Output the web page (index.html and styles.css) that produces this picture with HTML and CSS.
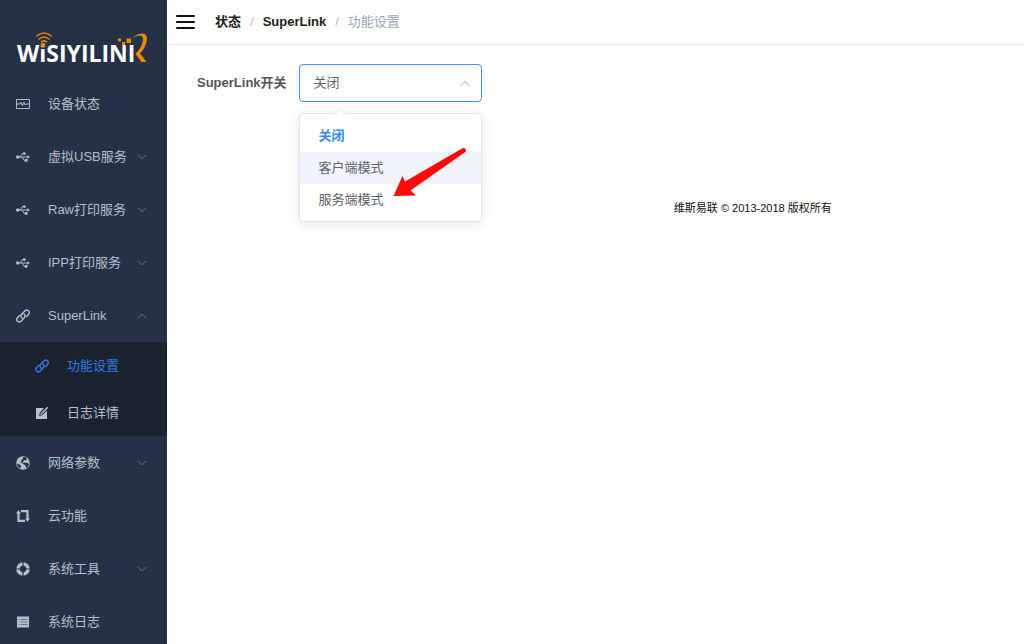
FILE: index.html
```html
<!DOCTYPE html>
<html lang="zh-CN">
<head>
<meta charset="utf-8">
<title>SuperLink 功能设置</title>
<link rel="stylesheet" href="styles.css">
</head>
<body>
<svg class="sprite" aria-hidden="true">
  <symbol id="down" viewBox="0 0 10 6"><path d="M1 .8 5 4.8 9 .8" fill="none" stroke="currentColor"/></symbol>
  <symbol id="up" viewBox="0 0 10 6"><path d="M1 5.2 5 1.2 9 5.2" fill="none" stroke="currentColor"/></symbol>
  <symbol id="usb" viewBox="0 0 14 14"><g fill="none" stroke="currentColor" stroke-width="1"><path d="M2 7h10M3.500 7C5.500 7 5 3.500 7 3.500h1M5.500 7c2 0 1.500 3.500 3.200 3.500h1"/></g><g fill="currentColor"><circle cx="1.700" cy="7" r="1.700"/><circle cx="8.300" cy="3.600" r="1.400"/><path d="M8.800 9h2.700v2.700H8.800zM11.200 5.300 14 7l-2.800 1.700z"/></g></symbol>
  <symbol id="link" viewBox="0 0 14 14"><g fill="none" stroke="currentColor" stroke-width="1.500" stroke-linecap="round"><path d="M6 9C4.600 7.700 4.700 6.400 5.700 5.300L8.800 2C9.900.9 11.300.7 12.400 1.700s1.100 2.500.1 3.600L10.600 7.400"/><path d="M8 5c1.400 1.300 1.300 2.600.3 3.700L5.200 12c-1.100 1.100-2.500 1.300-3.600.3s-1.100-2.500-.1-3.600L3.400 6.600"/></g></symbol>
</svg>
<div class="app">
  <aside class="sidebar">
    <a class="logo" href="#">
      <svg viewBox="0 0 134 36" role="img" aria-label="WISIYILINK">
        <text class="logo-text" x="1" y="32">WiSIYILINI</text>
        <g class="logo-arcs"><path d="M20 6.500q8-7 16 0M22.500 9.500q5.500-5 11 0M25 12.200q3-2.600 6 0"/></g>
        <g class="logo-accent"><circle cx="27" cy="15" r="2.200"/><path d="M102 8.500h3v3h-3zM106 12h3v3h-3zM110.500 8.500h4.500v4.500h-4.500z"/><path d="M115.500 9C121 2.500 130.500 1 131 8c0 6-3.500 12-7 15.500l6.500 8.500h-5l-6-8C124 19 127 14 127 9c0-5-6-4-11.500 0z"/></g>
      </svg>
    </a>
    <nav class="menu">
      <a class="item" href="#"><svg class="icon" viewBox="0 0 14 14"><path d="M.5 2.500h13v9H.5zM.5 7h3.300l1.100-2 1.500 4 1.500-4 1.200 3 .8-1h3.600" fill="none" stroke="currentColor"/></svg><span>设备状态</span></a>
      <a class="item" href="#"><svg class="icon"><use href="#usb"/></svg><span>虚拟USB服务</span><svg class="arrow"><use href="#down"/></svg></a>
      <a class="item" href="#"><svg class="icon"><use href="#usb"/></svg><span>Raw打印服务</span><svg class="arrow"><use href="#down"/></svg></a>
      <a class="item" href="#"><svg class="icon"><use href="#usb"/></svg><span>IPP打印服务</span><svg class="arrow"><use href="#down"/></svg></a>
      <a class="item" href="#"><svg class="icon"><use href="#link"/></svg><span>SuperLink</span><svg class="arrow"><use href="#up"/></svg></a>
      <div class="submenu">
        <a class="item active" href="#"><svg class="icon"><use href="#link"/></svg><span>功能设置</span></a>
        <a class="item" href="#"><svg class="icon" viewBox="0 0 14 14"><path d="M1 2h8L5 6.500 4 10l3.500-1L12 4.500V13H1z" fill="currentColor"/><path d="M5.500 8.500 12.800 1.200" stroke="currentColor" stroke-width="1.600"/></svg><span>日志详情</span></a>
      </div>
      <a class="item" href="#"><svg class="icon" viewBox="0 0 14 14"><circle cx="7" cy="7" r="6.800" fill="currentColor"/><path class="cut" d="M7 1.200 9.500 1 11 3 9.500 4.500 8 4 7.500 5.500 6 6l1.500 1L9 6.500l3 .5 1 1.500-1.500 3-1.500.5-.5-2.500L8 8.500 6.500 7.500 4.500 6 5 4.500 6.500 3.500zM1 7.500l2 .5 2 2-.5 2.500L2 11z"/></svg><span>网络参数</span><svg class="arrow"><use href="#down"/></svg></a>
      <a class="item" href="#"><svg class="icon" viewBox="0 0 14 14"><path d="M2.500 4v7.800H9M5 2.200h6.500V10" fill="none" stroke="currentColor" stroke-width="2.200"/><path d="M0 4.500 2.500 1.200 5 4.500zM9 9.500h5l-2.500 3.300z" fill="currentColor"/></svg><span>云功能</span></a>
      <a class="item" href="#"><svg class="icon" viewBox="0 0 14 14"><circle cx="7" cy="7" r="5" fill="none" stroke="currentColor" stroke-width="3.600"/><path class="cut" d="M6.400 0h1.200v4H6.400zM6.400 10h1.200v4H6.400zM0 6.400h4v1.200H0zM10 6.400h4v1.200h-4z"/></svg><span>系统工具</span><svg class="arrow"><use href="#down"/></svg></a>
      <a class="item" href="#"><svg class="icon" viewBox="0 0 14 14"><path d="M1 1.500h12v11H1z" fill="currentColor"/><path class="rule" d="M2.500 4.500h1M4.500 4.500h7M2.500 7h1M4.500 7h7M2.500 9.500h1M4.500 9.500h7"/></svg><span>系统日志</span></a>
    </nav>
  </aside>
  <div class="page">
    <header class="topbar">
      <button class="toggle" aria-label="折叠菜单"><svg viewBox="0 0 20 16"><path d="M2 2h17M2 8h17M2 14h17" stroke="currentColor" stroke-width="2" stroke-linecap="round"/></svg></button>
      <nav class="crumbs"><a href="#">状态</a><i>/</i><a href="#">SuperLink</a><i>/</i><span>功能设置</span></nav>
    </header>
    <main class="content">
      <form class="form">
        <label for="mode">SuperLink开关</label>
        <div class="field">
          <select id="mode"><option>关闭</option><option>客户端模式</option><option>服务端模式</option></select>
          <svg class="caret"><use href="#up"/></svg>
          <ul class="dropdown" role="listbox" aria-label="SuperLink开关">
            <li class="selected" role="option" aria-selected="true">关闭</li>
            <li class="hover" role="option">客户端模式</li>
            <li role="option">服务端模式</li>
          </ul>
          <svg class="pointer" viewBox="0 0 76 52" aria-hidden="true"><path d="M1.500 49 10.500 29 13 34.500 70.500 1.200Q74 0 74 4.500L18.500 43.500 24 48.500z"/></svg>
        </div>
      </form>
      <footer class="footer">维斯易联 © 2013-2018 版权所有</footer>
    </main>
  </div>
</div>
</body>
</html>
```
FILE: styles.css
```css
* { box-sizing: border-box; }
body {
  margin: 0;
  font: 13px/20px "Liberation Sans", "Noto Sans CJK SC", sans-serif;
  color: #000;
  background: #fff;
}
a { color: inherit; text-decoration: none; }
.sprite { position: absolute; width: 0; height: 0; }
.app { display: flex; min-height: 100vh; }

.sidebar { flex: 0 0 167px; background: #253144; color: #b4c0ce; }
.logo { display: block; height: 77px; padding: 30px 0 0 16px; }
.logo svg { display: block; width: 134px; height: 36px; overflow: visible; }
.logo-text { font: bold 23px "Open Sans", sans-serif; fill: #fff; }
.logo-arcs { fill: none; stroke: #e08312; stroke-width: 1.6; }
.logo-accent { fill: #f08905; }
.item { display: flex; align-items: center; height: 53px; padding: 0 20px 0 16px; }
.item span { flex: 1; white-space: nowrap; }
.icon { width: 14px; height: 14px; margin-right: 18px; }
.arrow { width: 10px; height: 6px; color: #697384; }
.submenu { background: #1a232e; }
.submenu .item { height: 47px; padding-left: 35px; }
.submenu .active { color: #2d7de4; }
.cut { fill: #253144; }
.rule { stroke: #657083; fill: none; }

.page { flex: 1; min-width: 0; }
.topbar {
  display: flex;
  align-items: center;
  height: 45px;
  padding: 0 8px;
  border-bottom: 1px solid #e2e4e8;
}
.toggle { width: 20px; height: 16px; padding: 0; border: 0; background: none; color: #111; }
.toggle svg { display: block; }
.crumbs { display: flex; margin-left: 20px; color: #97a8be; }
.crumbs a { font-weight: bold; color: #222; }
.crumbs i { margin: 0 9px; font-style: normal; color: #b5bdca; }

.content { display: flex; padding: 19px 0 0 30px; }
.form { display: flex; align-items: flex-start; }
.form label { margin-right: 12px; line-height: 38px; font-weight: bold; color: #54565b; }
.field { position: relative; width: 183px; }
.field select {
  display: block;
  width: 100%;
  height: 38px;
  padding: 0 14px;
  appearance: none;
  border: 1px solid #448ff5;
  border-radius: 4px;
  background: #fff;
  font: inherit;
  color: #606266;
}
.caret { position: absolute; top: 16px; right: 11px; width: 12px; height: 7px; color: #c0c4cc; }
.dropdown {
  position: absolute;
  top: 49px;
  left: 0;
  width: 100%;
  margin: 0;
  padding: 6px 0 5px;
  list-style: none;
  border: 1px solid #e0e4ec;
  border-radius: 4px;
  background: #fff;
  box-shadow: 0 2px 12px rgba(0, 0, 0, 0.1);
  color: #606266;
}
.dropdown::before {
  content: "";
  position: absolute;
  top: -4px;
  left: 35px;
  width: 8px;
  height: 8px;
  border: 1px solid #e9ecf2;
  border-right: 0;
  border-bottom: 0;
  background: #fff;
  transform: rotate(45deg);
}
.dropdown li { position: relative; padding: 0 19px; line-height: 32px; }
.dropdown .selected { font-weight: bold; color: #348bff; }
.dropdown .hover { background: #f1f4f9; }
.pointer { position: absolute; top: 83px; left: 93px; width: 76px; height: 52px; fill: #ff0808; }

.footer { flex: 1; padding-top: 134px; text-align: center; font-size: 11px; color: #111; }
```
